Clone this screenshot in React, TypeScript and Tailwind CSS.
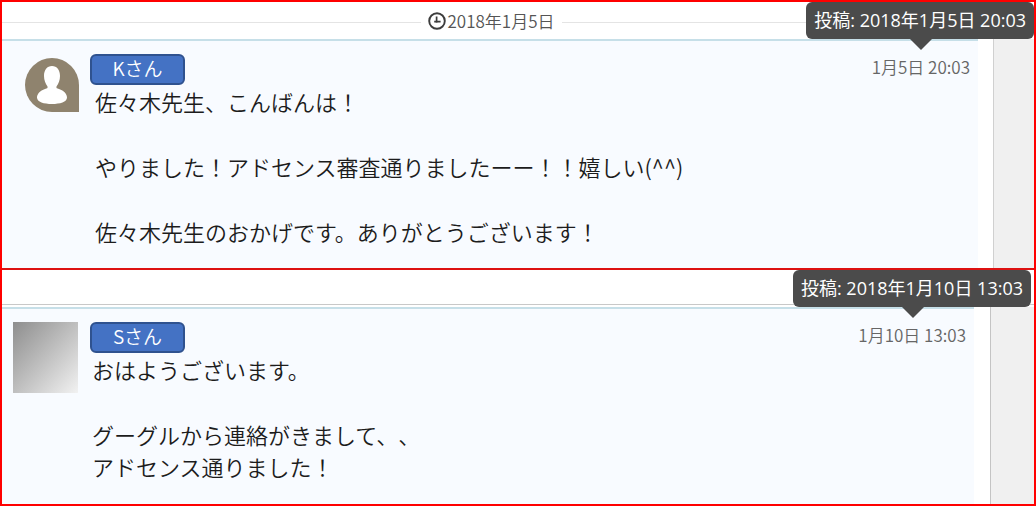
import { ReactNode } from "react";
import clsx from "clsx";

type Post = {
  id: string;
  name: string;
  time: string;
  postedAt: string;
  dateTime: string;
  paragraphs: string[][];
};

const posts: Record<"k" | "s", Post> = {
  k: {
    id: "k",
    name: "Kさん",
    time: "1月5日 20:03",
    postedAt: "投稿: 2018年1月5日 20:03",
    dateTime: "2018-01-05T20:03",
    paragraphs: [
      ["佐々木先生、こんばんは！"],
      ["やりました！アドセンス審査通りましたーー！！嬉しい(^^)"],
      ["佐々木先生のおかげです。ありがとうございます！"],
    ],
  },
  s: {
    id: "s",
    name: "Sさん",
    time: "1月10日 13:03",
    postedAt: "投稿: 2018年1月10日 13:03",
    dateTime: "2018-01-10T13:03",
    paragraphs: [["おはようございます。"], ["グーグルから連絡がきまして、、", "アドセンス通りました！"]],
  },
};

function ClockIcon() {
  return (
    <svg width="18" height="18" viewBox="0 0 18 18" fill="none" stroke="#3c3c3c" aria-hidden="true">
      <circle cx="9" cy="9" r="7.8" strokeWidth="1.9" />
      <path d="M8.6 4.500V10.800M6.200 9.600H12.600" strokeWidth="1.7" />
    </svg>
  );
}

function PersonAvatar() {
  return (
    <svg className="mt-1 ml-[23px]" width="54" height="54" viewBox="0 0 54 54" role="img" aria-label="Kさん">
      <path d="M27 0A27 27 0 0 1 54 27V54H27A27 27 0 0 1 27 0Z" fill="#8f836e" />
      <path
        d="M27 8C32 8 35 12 35 18C35 22 33.500 26 31.500 28.500C31 30 32 30.500 34 31C39 32.500 42 36 42 39.500C42 44 35 46 27 46C19 46 12 44 12 39.500C12 36 15 32.500 20 31C22 30.500 23 30 22.500 28.500C20.500 26 19 22 19 18C19 12 22 8 27 8Z"
        fill="#fff"
      />
    </svg>
  );
}

function Tooltip({ text, className }: { text: string; className: string }) {
  return (
    <div
      role="tooltip"
      className={clsx(
        "absolute top-0 z-10 rounded-md bg-[#4b4b4b] px-2 font-['Open_Sans','Noto_Sans_CJK_JP',sans-serif] text-[18px] leading-[37px] whitespace-nowrap text-white",
        className
      )}
    >
      {text}
      <svg className="absolute top-full left-1/2 -ml-2.5" width="22" height="11" viewBox="0 0 22 11" aria-hidden="true">
        <path d="M0 0H22L11 11Z" fill="#4b4b4b" />
      </svg>
    </div>
  );
}

function Message({ post, avatar, textClass }: { post: Post; avatar: ReactNode; textClass: string }) {
  return (
    <article className="flex flex-1 items-start border-t-2 border-[#c6dfe8] bg-[#f8fbff] pt-[13px] pr-2 pb-[21px]">
      <div className="w-[88px] shrink-0">{avatar}</div>
      <div className="min-w-0 flex-1">
        <h2 className="w-[95px] rounded-md border-2 border-[#2f528f] bg-[#4472c4] pb-1 text-center text-[19px] leading-[23px] font-[350] text-white">
          {post.name}
        </h2>
        <div className={clsx("space-y-[33px] text-[22px] leading-8 font-[350] text-[#1c1c1c]", textClass)}>
          {post.paragraphs.map((lines) => (
            <p key={lines[0]}>
              {lines.map((line) => (
                <span key={line} className="block">
                  {line}
                </span>
              ))}
            </p>
          ))}
        </div>
      </div>
      <time dateTime={post.dateTime} className="text-[17px] leading-[26px] font-[350] text-[#666]">
        {post.time}
      </time>
    </article>
  );
}

export default function App() {
  return (
    <main className="flex min-h-screen flex-col border-2 border-[#ff0000] bg-white font-['Noto_Sans_CJK_JP',sans-serif] [text-spacing-trim:space-all]">
      <section className="relative border-b-2 border-[#dd1111]">
        <div className="flex h-[37px] items-center pt-1">
          <hr className="flex-1 border-[#e4e4e4]" />
          <div className="flex items-center gap-0.5 px-[7px] pb-1 text-[17px] leading-6 font-[350] text-[#555]">
            <ClockIcon />
            2018年1月5日
          </div>
          <hr className="flex-1 border-[#e4e4e4]" />
          <div className="w-[54px]" />
        </div>
        <Tooltip text={posts.k.postedAt} className="right-0" />
        <div className="flex">
          <Message post={posts.k} avatar={<PersonAvatar />} textClass="pl-[5px]" />
          <div className="ml-[15px] w-[41px] border-l border-[#d0d0d0] bg-[#f0f0f0]" />
        </div>
      </section>

      <section className="relative flex flex-1 flex-col">
        <div className="mb-0.5 h-[35px] border-b border-[#c8c8c8]" />
        <Tooltip text={posts.s.postedAt} className="right-[3px]" />
        <div className="flex flex-1">
          <Message
            post={posts.s}
            avatar={<div className="ml-[11px] h-[71px] w-[65px] bg-linear-to-br from-[#8e8e8e] to-[#f2f2f2]" />}
            textClass="pl-0.5"
          />
          <div className="ml-4 w-11 border-l border-[#c4c4c4] bg-[#f0f0f0]" />
        </div>
      </section>
    </main>
  );
}
